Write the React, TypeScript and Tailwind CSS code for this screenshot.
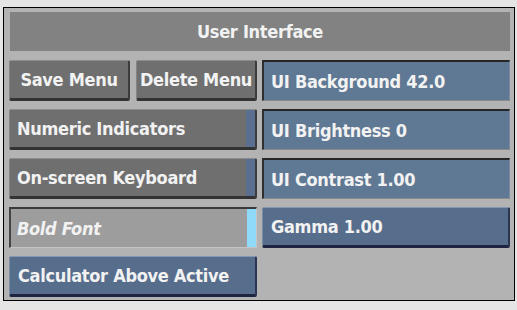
import React from "react";

const font = { fontFamily: '"DejaVu Sans Condensed", "DejaVu Sans", sans-serif' };
const txt = "text-[18px] font-semibold tracking-[-0.3px] text-[#f2f2f2]";

function GrayButton({ label, center, strip }: { label: string; center?: boolean; strip?: string }) {
  return (
    <div className="flex h-[41px] rounded-[2px] border-t border-l border-t-[#8c8c8c] border-l-[#858585] border-b-[3px] border-r-2 border-b-[#333] border-r-[#3c3c3c] bg-[#6f6f6f]">
      <div className={`flex flex-1 items-center ${txt} ${center ? "justify-center" : "pl-[7px]"}`}>
        {label}
      </div>
      {strip && <div className={`w-[9px] ${strip}`} />}
    </div>
  );
}

function SunkenField({ label }: { label: string }) {
  return (
    <div className={`flex h-[41px] items-center border-t-2 border-l-2 border-t-[#262626] border-l-[#2e2e2e] border-b border-r border-b-[#8a8a8a] border-r-[#7a8aa0] bg-[#5f7894] pl-[7px] ${txt}`}>
      {label}
    </div>
  );
}

function RaisedBlue({ label }: { label: string }) {
  return (
    <div className={`flex h-[41px] items-center rounded-[2px] border-t border-l border-t-[#8496b0] border-l-[#7b8ca6] border-b-[3px] border-r-2 border-b-[#1f2540] border-r-[#2b3450] bg-[#576d8c] pl-[8px] ${txt}`}>
      {label}
    </div>
  );
}

export default function App() {
  return (
    <div className="h-[310px] w-[517px] bg-[#e5e5e5] pl-[3px] pt-[7px]" style={font}>
      <div className="flex h-[294px] w-[512px] flex-col border border-black bg-[#b3b3b3] px-[5px] pt-[4px]">
        <div className={`ml-[1px] flex h-[39px] w-[500px] items-center justify-center bg-[#828282] ${txt}`}>
          User Interface
        </div>
        <div className="mt-[9px] grid grid-cols-[248px_248px] gap-x-[5px] gap-y-[8px]">
          <div className="grid grid-cols-2 gap-[6px]">
            <GrayButton label="Save Menu" center />
            <GrayButton label="Delete Menu" center />
          </div>
          <SunkenField label="UI Background 42.0" />

          <GrayButton label="Numeric Indicators" strip="bg-[#5a6f90]" />
          <SunkenField label="UI Brightness 0" />

          <GrayButton label="On-screen Keyboard" strip="bg-[#5a6f90]" />
          <SunkenField label="UI Contrast 1.00" />

          <div className="flex h-[41px] border-t-2 border-l-2 border-t-[#3a3a3a] border-l-[#444] border-b border-r border-b-[#c4c4c4] border-r-[#c4c4c4] bg-[#9d9d9d]">
            <div className={`flex flex-1 items-center pl-[6px] italic ${txt}`}>
              Bold Font
            </div>
            <div className="w-[9px] bg-[#8fdaf8]" />
          </div>
          <RaisedBlue label="Gamma 1.00" />

          <RaisedBlue label="Calculator Above Active" />
          <div />
        </div>
      </div>
    </div>
  );
}
